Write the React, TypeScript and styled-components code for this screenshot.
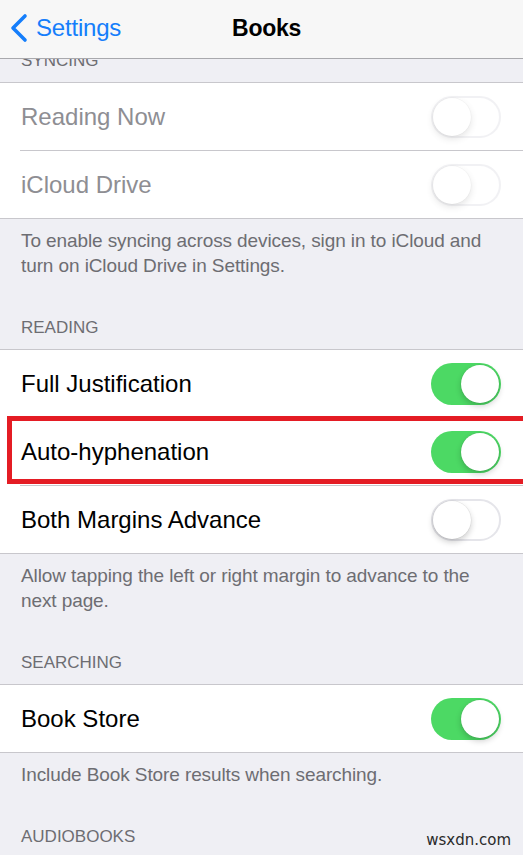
import React from 'react'
import styled, { createGlobalStyle } from 'styled-components'

const GlobalStyle = createGlobalStyle`
html, body {
  margin: 0;
  padding: 0;
  background: #efeff4;
}
* {
  box-sizing: border-box;
}
`

type RowData = {
    label: string
    on: boolean
    disabled?: boolean
    highlighted?: boolean
}

type SectionData = {
    title: string
    rows: RowData[]
    footer: string
    clipped?: boolean
}

const sections: SectionData[] = [
    {
        title: 'Syncing',
        clipped: true,
        rows: [
            { label: 'Reading Now', on: false, disabled: true },
            { label: 'iCloud Drive', on: false, disabled: true },
        ],
        footer: 'To enable syncing across devices, sign in to iCloud and turn on iCloud Drive in Settings.',
    },
    {
        title: 'Reading',
        rows: [
            { label: 'Full Justification', on: true },
            { label: 'Auto-hyphenation', on: true, highlighted: true },
            { label: 'Both Margins Advance', on: false },
        ],
        footer: 'Allow tapping the left or right margin to advance to the next page.',
    },
    {
        title: 'Searching',
        rows: [{ label: 'Book Store', on: true }],
        footer: 'Include Book Store results when searching.',
    },
]

export default function App() {
    return (
        <Screen>
            <GlobalStyle />
            <NavBar>
                <BackButton>
                    <svg width="18" height="30" viewBox="0 0 18 30">
                        <path d="M15 3 L3 15 L15 27" fill="none" stroke="#157efb" strokeWidth="3.6" strokeLinecap="round" strokeLinejoin="round" />
                    </svg>
                    <BackLabel>Settings</BackLabel>
                </BackButton>
                <Title>Books</Title>
                <span />
            </NavBar>
            <Content>
                {sections.map((s) => (
                    <section key={s.title}>
                        <Header $clipped={s.clipped}>
                            <span>{s.title}</span>
                        </Header>
                        <Group>
                            {s.rows.map((r) => (
                                <Row key={r.label} $highlighted={r.highlighted}>
                                    <RowInner>
                                        <Label $disabled={r.disabled}>{r.label}</Label>
                                        <Switch $on={r.on} $disabled={r.disabled}>
                                            <Knob $on={r.on} />
                                        </Switch>
                                    </RowInner>
                                </Row>
                            ))}
                        </Group>
                        <Footer>{s.footer}</Footer>
                    </section>
                ))}
                <Header>
                    <span>Audiobooks</span>
                    <Watermark>wsxdn.com</Watermark>
                </Header>
            </Content>
        </Screen>
    )
}

const Screen = styled.div`
width: 523px;
height: 855px;
overflow: hidden;
background: #efeff4;
font-family: "Liberation Sans", Arial, sans-serif;
display: flex;
flex-direction: column;
`

const NavBar = styled.header`
flex: none;
height: 59px;
background: #f7f7f7;
border-bottom: 1px solid #a9a9ad;
display: grid;
grid-template-columns: 1fr auto 1fr;
align-items: center;
padding: 0 0 3px 10px;
`

const BackButton = styled.div`
display: flex;
align-items: center;
gap: 8px;
color: #157efb;
`

const BackLabel = styled.span`
font-size: 24px;
line-height: 30px;
letter-spacing: -0.2px;
`

const Title = styled.div`
font-size: 23px;
line-height: 30px;
font-weight: bold;
color: #000;
letter-spacing: -0.3px;
`

const Content = styled.main`
flex: 1;
overflow: hidden;
`

const Header = styled.div<{ $clipped?: boolean }>`
display: flex;
align-items: flex-end;
justify-content: space-between;
padding: ${(p) => (p.$clipped ? '0' : '39px')} 12px 10px 21px;
height: ${(p) => (p.$clipped ? '23px' : 'auto')};
overflow: hidden;
font-size: 17px;
line-height: 22px;
color: #6d6d72;
text-transform: uppercase;
`

const Watermark = styled.span`
font-family: "DejaVu Sans", sans-serif;
font-size: 15px;
text-transform: none;
color: #2a2a2a;
margin-bottom: -3px;
`

const Group = styled.div`
background: #fff;
border-top: 1px solid #c8c7cc;
border-bottom: 1px solid #c8c7cc;
`

const Row = styled.div<{ $highlighted?: boolean }>`
position: relative;
padding-left: 20px;
&:last-child > div {
  border-bottom: none;
}
${(p) =>
        p.$highlighted &&
        `
  &::after {
    content: "";
    position: absolute;
    left: 7px;
    right: -6px;
    top: -2px;
    bottom: 2px;
    border: 5px solid #e41c24;
    pointer-events: none;
  }
`}
`

const RowInner = styled.div`
box-sizing: content-box;
height: 67px;
display: flex;
align-items: center;
justify-content: space-between;
padding: 0 22px 0 1px;
border-bottom: 1px solid #c8c7cc;
`

const Label = styled.span<{ $disabled?: boolean }>`
font-size: 24px;
color: ${(p) => (p.$disabled ? '#8e8e93' : '#000')};
`

const Switch = styled.div<{ $on: boolean; $disabled?: boolean }>`
position: relative;
width: 70px;
height: 42px;
border-radius: 21px;
background: ${(p) => (p.$on ? '#4cd964' : '#fff')};
border: ${(p) => (p.$on ? 'none' : '2px solid #e5e5ea')};
opacity: ${(p) => (p.$disabled ? 0.5 : 1)};
`

const Knob = styled.div<{ $on: boolean }>`
position: absolute;
top: ${(p) => (p.$on ? '2px' : '0')};
left: ${(p) => (p.$on ? '30px' : '0')};
width: 38px;
height: 38px;
border-radius: 50%;
background: #fff;
box-shadow: 0 3px 6px rgba(0, 0, 0, 0.2), 0 0 0 0.5px rgba(0, 0, 0, 0.08);
`

const Footer = styled.p`
margin: 0;
padding: 9px 20px 0 21px;
font-size: 19px;
line-height: 25px;
letter-spacing: -0.1px;
color: #6d6d72;
`
